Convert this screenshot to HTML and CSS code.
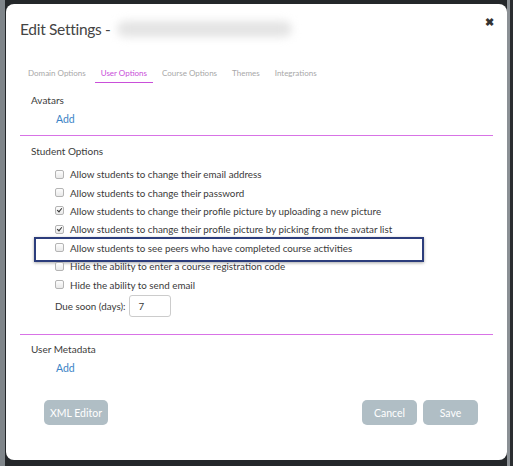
FILE: index.html
```html
<!DOCTYPE html>
<html>
<head>
<meta charset="utf-8">
<link rel="stylesheet" href="styles.css">
</head>
<body>
<div class="modal">
  <div class="header">
    <h1 class="title">Edit Settings - <span class="blur"></span></h1>
    <span class="close">&#10006;</span>
  </div>
  <div class="tabs">
    <span class="tab">Domain Options</span>
    <span class="tab active">User Options</span>
    <span class="tab">Course Options</span>
    <span class="tab">Themes</span>
    <span class="tab">Integrations</span>
  </div>
  <div class="section avatars">
    <div class="label">Avatars</div>
    <a class="add">Add</a>
  </div>
  <div class="section student">
    <div class="label">Student Options</div>
    <div class="options">
      <label class="opt"><input type="checkbox"> Allow students to change their email address</label>
      <label class="opt"><input type="checkbox"> Allow students to change their password</label>
      <label class="opt"><input type="checkbox" checked> Allow students to change their profile picture by uploading a new picture</label>
      <label class="opt"><input type="checkbox" checked> Allow students to change their profile picture by picking from the avatar list</label>
      <label class="opt hl"><input type="checkbox"> Allow students to see peers who have completed course activities</label>
      <label class="opt"><input type="checkbox"> Hide the ability to enter a course registration code</label>
      <label class="opt"><input type="checkbox"> Hide the ability to send email</label>
      <div class="due">Due soon (days): <span class="num">7</span></div>
    </div>
  </div>
  <div class="section meta">
    <div class="label">User Metadata</div>
    <a class="add">Add</a>
  </div>
  <div class="footer">
    <button class="btn xml">XML Editor</button>
    <div class="right">
      <button class="btn cancel">Cancel</button>
      <button class="btn save">Save</button>
    </div>
  </div>
</div>
</body>
</html>
```
FILE: styles.css
```css
html, body {
  margin: 0;
  padding: 0;
  width: 513px;
  height: 466px;
  overflow: hidden;
}
body {
  background:
    linear-gradient(to right, #7f858a 0, #7f858a 5px, transparent 5px),
    linear-gradient(to left, #2a2d30 0, #2a2d30 3px, #8b9095 3px, #8b9095 6px, transparent 6px),
    #24272a;
  font-family: Lato, "Noto Sans", sans-serif;
  color: #3a3a3a;
  padding-top: 4px;
  box-sizing: border-box;
}
.modal {
  margin: 0 6px;
  width: 501px;
  height: 456px;
  background: #fff;
  border-radius: 8px;
  box-sizing: border-box;
  padding: 0 14px;
  display: flex;
  flex-direction: column;
}
.header {
  height: 58px;
  flex: none;
  display: flex;
  justify-content: space-between;
  align-items: flex-start;
}
.title {
  margin: 16px 0 0 0;
  font-size: 15.5px;
  font-weight: 400;
  color: #444;
  display: flex;
  align-items: center;
  letter-spacing: -0.3px;
}
.blur {
  display: inline-block;
  width: 175px;
  height: 16px;
  margin-left: 6px;
  background: #e4e4e4;
  border-radius: 8px;
  filter: blur(4px);
}
.close {
  margin: 11px -1px 0 0;
  font-size: 11px;
  color: #333;
  font-weight: bold;
}
.tabs {
  flex: none;
  display: flex;
  padding-left: 8px;
  font-size: 8px;
  color: #a8a8a8;
  height: 26px;
}
.tab {
  margin-right: 15px;
  padding-top: 6px;
  height: 14px;
  box-sizing: content-box;
}
.tab.active {
  color: #c94fd9;
  border-bottom: 1px solid #c94fd9;
  padding-left: 6px;
  padding-right: 6px;
  margin-left: -6px;
  margin-right: 9px;
}
.section {
  flex: none;
  box-sizing: border-box;
  border-bottom: 1px solid #d873e6;
  padding-left: 11px;
}
.label {
  font-size: 10px;
  color: #3c3c3c;
}
.avatars {
  padding-top: 6px;
  height: 48px;
}
.avatars .label { height: 17px; }
.add {
  display: block;
  margin-left: 25px;
  margin-top: 2px;
  font-size: 10.5px;
  color: #3a83c6;
}
.student {
  padding-top: 9px;
  height: 199px;
}
.student .label {
  height: 20px;
}
.options {
  padding-left: 24px;
}
.opt {
  display: flex;
  align-items: center;
  height: 18.4px;
  font-size: 9.8px;
  color: #3a3a3a;
  position: relative;
}
.opt input {
  appearance: none;
  -webkit-appearance: none;
  margin: 0 6px 0 0;
  width: 9px;
  height: 9px;
  border: 1px solid #b4b4b4;
  border-radius: 2px;
  background: linear-gradient(#fdfdfd, #e9e9e9);
  position: relative;
  flex: none;
}
.opt input:checked::after {
  content: "";
  position: absolute;
  left: 2px;
  top: 0px;
  width: 2px;
  height: 4px;
  border: solid #333;
  border-width: 0 1.5px 1.5px 0;
  transform: rotate(40deg);
}
.opt.hl::after {
  content: "";
  position: absolute;
  left: -21px;
  top: -2px;
  width: 386px;
  height: 21px;
  border: 2px solid #2c3d7c;
  box-shadow: 0 1px 3px rgba(0,0,0,0.35);
  pointer-events: none;
}
.due {
  display: flex;
  align-items: center;
  font-size: 9.8px;
  height: 24px;
}
.num {
  display: inline-block;
  width: 32px;
  height: 20px;
  border: 1px solid #ccc;
  border-radius: 3px;
  margin-left: 4px;
  padding-left: 8px;
  line-height: 20px;
}
.meta {
  border-bottom: none;
  padding-top: 8px;
  height: 60px;
}
.meta .label { height: 14px; }
.meta .add { margin-top: 5px; }
.footer {
  flex: none;
  margin-top: 5px;
  display: flex;
  justify-content: space-between;
  padding: 0 15px 0 24px;
}
.right {
  display: flex;
  gap: 6px;
}
.btn {
  border: none;
  background: #b0bec5;
  color: #fff;
  font-family: Lato, "Noto Sans", sans-serif;
  font-size: 10.5px;
  height: 25px;
  border-radius: 5px;
  padding: 0;
  white-space: nowrap;
}
.xml { width: 64px; }
.cancel { width: 55px; }
.save { width: 55px; }
```
